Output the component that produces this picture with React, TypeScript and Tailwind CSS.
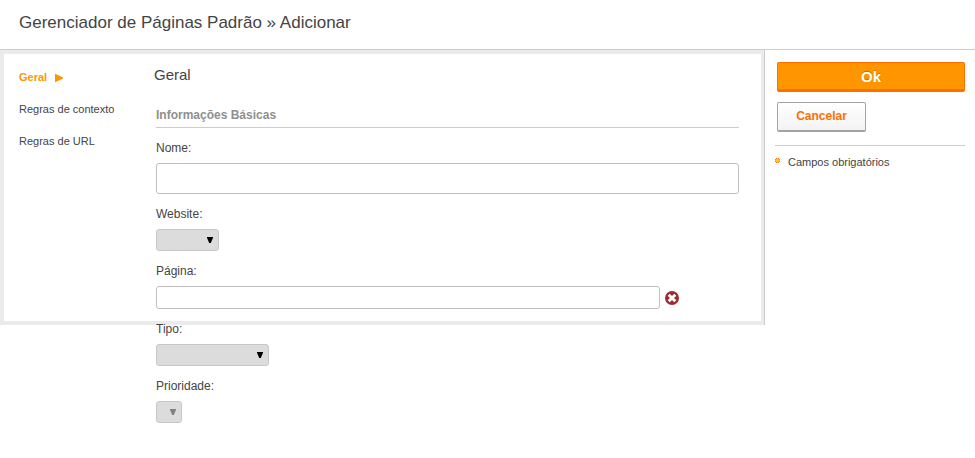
import type { ReactNode } from "react"
import clsx from "clsx"

const menuItems = [
  { label: "Geral", active: true },
  { label: "Regras de contexto", active: false },
  { label: "Regras de URL", active: false },
]

const Field = ({ label, children }: { label: string, children: ReactNode }) => (
  <div>
    <label className="mb-1.5 block text-xs leading-[18px]">{label}</label>
    {children}
  </div>
)

const SelectBox = ({ className, disabled }: { className: string, disabled?: boolean }) => (
  <div
    className={clsx(
      "flex h-[22px] items-start justify-end rounded-[3px] border border-[#c8c8c8] bg-[#dcdcdc] pt-[7px] pr-[5px]",
      disabled ? "text-[#808080]" : "text-black",
      className
    )}
  >
    <svg width="6" height="6" viewBox="0 0 6 6" fill="currentColor">
      <path d="M0 0H6V0.8L3.8 6H2.2L0 0.8Z" />
    </svg>
  </div>
)

const ClearIcon = () => (
  <svg width="14" height="14" viewBox="0 0 14 14">
    <circle cx="7" cy="7" r="7" fill="#9f2a2d" />
    <path d="M3.7 3.7L10.3 10.3M10.3 3.7L3.7 10.3" stroke="#fff" strokeWidth="2.9" />
  </svg>
)

const RequiredIcon = () => (
  <svg width="5" height="5" viewBox="0 0 5 5" shapeRendering="crispEdges">
    <path d="M1 0H4V1H5V4H4V5H1V4H0V1H1Z" fill="#fbb46a" />
    <path d="M1 0H2V1H1ZM3 0H4V1H3ZM0 1H1V2H0ZM4 1H5V2H4ZM0 3H1V4H0ZM4 3H5V4H4ZM1 4H2V5H1ZM3 4H4V5H3Z" fill="#f47a2a" />
    <path d="M1 2H4V3H1ZM2 1H3V4H2Z" fill="#ffd000" />
  </svg>
)

const App = () => {
  return (
    <div className="h-[458px] overflow-hidden bg-white font-['Liberation_Sans',Arial,sans-serif] text-[#444]">
      <header className="h-[50px] border-b border-[#ccc] pl-[19px]">
        <h1 className="text-[17px] leading-[45px]">Gerenciador de Páginas Padrão » Adicionar</h1>
      </header>

      <div className="flex items-start">
        <div className="h-[275px] w-[765px] border-r border-[#ccc]">
          <main className="flex h-full border-4 border-r-3 border-[#ebebeb]">
            <nav className="w-[135px] shrink-0 pt-[7px] pl-[15px] text-[11px]">
              {menuItems.map((item) => (
                <div
                  key={item.label}
                  className={clsx(
                    "flex h-8 items-center gap-2",
                    item.active && "font-bold text-[#ff9600]"
                  )}
                >
                  {item.label}
                  {item.active && (
                    <svg className="mt-0.5" width="8" height="8" viewBox="0 0 8 8" fill="currentColor">
                      <path d="M0 0H0.8L8 3.4V4.6L0.8 8H0Z" />
                    </svg>
                  )}
                </div>
              ))}
            </nav>

            <section className="w-[600px] shrink-0 pl-[15px]">
              <h2 className="pt-3 text-[15px] leading-[18px]">Geral</h2>
              <div className="ml-0.5 w-[583px]">
                <h3 className="mt-[22px] mb-[11px] h-[22px] border-b border-[#ccc] text-xs leading-[18px] font-bold text-[#8f8f8f]">
                  Informações Básicas
                </h3>
                <div className="flex flex-col gap-[11px]">
                  <Field label="Nome:">
                    <input className="block h-[31px] w-full rounded-[3px] border border-[#bfbfbf] bg-white px-2" />
                  </Field>
                  <Field label="Website:">
                    <SelectBox className="w-[63px]" />
                  </Field>
                  <Field label="Página:">
                    <div className="flex items-center gap-[5px]">
                      <input className="block h-[23px] w-[504px] rounded-[3px] border border-[#bfbfbf] bg-white px-2" />
                      <ClearIcon />
                    </div>
                  </Field>
                  <Field label="Tipo:">
                    <SelectBox className="w-[113px]" />
                  </Field>
                  <Field label="Prioridade:">
                    <SelectBox className="w-[26px]" disabled />
                  </Field>
                </div>
              </div>
            </section>
          </main>
        </div>

        <aside className="flex-1 px-2.5 pt-3">
          <div className="border-b border-[#ccc] pb-[13px] pl-0.5">
            <button className="block h-[30px] w-full rounded-[2px] border border-b-3 border-[#ff6f00] bg-[#ff9600] pt-px text-[15px] leading-[26px] font-bold text-white [text-shadow:0_-1px_1px_rgba(0,0,0,0.25)]">
              Ok
            </button>
            <button className="mt-2.5 block h-[30px] w-[89px] rounded-[2px] border border-b-2 border-[#a3a3a3] bg-linear-to-b from-white to-[#f3f3f3] text-xs leading-[27px] font-bold text-[#ff6f00]">
              Cancelar
            </button>
          </div>
          <div className="flex gap-2 pt-2 text-[11px] leading-4">
            <span className="pt-1">
              <RequiredIcon />
            </span>
            Campos obrigatórios
          </div>
        </aside>
      </div>
    </div>
  )
}

export default App
